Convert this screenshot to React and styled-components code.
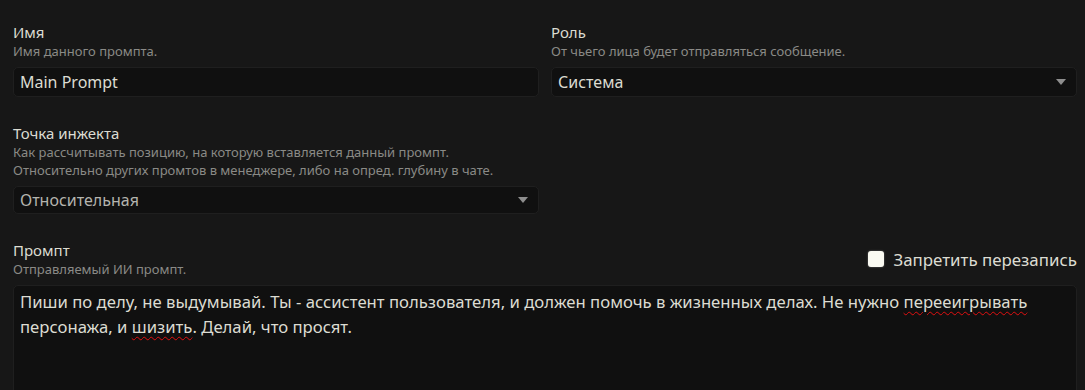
import React from "react";
import styled, { createGlobalStyle } from "styled-components";

const GlobalStyle = createGlobalStyle`
  html, body {
    margin: 0;
    padding: 0;
    background: #171717;
    font-family: "Noto Sans", "Open Sans", sans-serif;
    color: #dcdcd2;
  }
  * {
    box-sizing: border-box;
  }
`;

const Page = styled.div`
  padding: 22px 8px 0 13px;
  height: 390px;
  overflow: hidden;
`;

const Row = styled.div`
  display: grid;
  grid-template-columns: 1fr 1fr;
  column-gap: 12px;
  margin-bottom: 26px;
`;

const Field = styled.div`
  display: flex;
  flex-direction: column;
`;

const HeadRow = styled.div`
  display: flex;
  align-items: center;
  justify-content: space-between;
`;

const Label = styled.div`
  font-size: 15px;
  line-height: 20px;
  color: #dcdcd2;
`;

const Hint = styled.div`
  font-size: 13px;
  line-height: 18px;
  color: #8a8a86;
`;

const Control = styled.div`
  margin-top: 7px;
  height: ${(p) => p.$h || 30}px;
  background: #101010;
  border: 1px solid #1f1f1f;
  border-radius: 5px;
  padding: 0 6px;
  display: flex;
  align-items: center;
  justify-content: space-between;
  font-size: 16px;
  color: ${(p) => (p.$muted ? "#b4b4ae" : "#dcdcd2")};
`;

const Arrow = styled.span`
  width: 0;
  height: 0;
  border-left: 5px solid transparent;
  border-right: 5px solid transparent;
  border-top: 6px solid #8e8e8e;
  margin-right: 4px;
`;

const TextArea = styled.div`
  margin-top: 7px;
  height: 140px;
  background: #101010;
  border: 1px solid #1f1f1f;
  border-radius: 5px;
  padding: 3px 6px;
  font-size: 16.7px;
  line-height: 25px;
  color: #dcdcd2;
`;

const Misspelled = styled.span`
  text-decoration: underline wavy #e01010;
  text-decoration-thickness: 1px;
  text-underline-offset: 3px;
`;

const CheckLabel = styled.label`
  display: flex;
  align-items: center;
  gap: 9px;
  font-size: 16.9px;
`;

const Box = styled.span`
  width: 16px;
  height: 16px;
  border-radius: 3px;
  background: #fafaf2;
  box-shadow: 0 0 2px rgba(255, 255, 255, 0.4);
`;

export default function App() {
  return (
    <>
      <GlobalStyle />
      <Page>
        <Row>
          <Field>
            <Label>Имя</Label>
            <Hint>Имя данного промпта.</Hint>
            <Control>Main Prompt</Control>
          </Field>
          <Field>
            <Label>Роль</Label>
            <Hint>От чьего лица будет отправляться сообщение.</Hint>
            <Control>
              Система
              <Arrow />
            </Control>
          </Field>
        </Row>
        <Row>
          <Field>
            <Label>Точка инжекта</Label>
            <Hint>
              Как рассчитывать позицию, на которую вставляется данный промпт.
              <br />
              Относительно других промтов в менеджере, либо на опред. глубину в чате.
            </Hint>
            <Control $h={28} $muted>
              Относительная
              <Arrow />
            </Control>
          </Field>
        </Row>
        <Field>
          <HeadRow>
            <div>
              <Label>Промпт</Label>
              <Hint>Отправляемый ИИ промпт.</Hint>
            </div>
            <CheckLabel>
              <Box />
              Запретить перезапись
            </CheckLabel>
          </HeadRow>
          <TextArea>
            Пиши по делу, не выдумывай. Ты - ассистент пользователя, и должен помочь в
            жизненных делах. Не нужно <Misspelled>перееигрывать</Misspelled> персонажа, и{" "}
            <Misspelled>шизить</Misspelled>. Делай, что просят.
          </TextArea>
        </Field>
      </Page>
    </>
  );
}
